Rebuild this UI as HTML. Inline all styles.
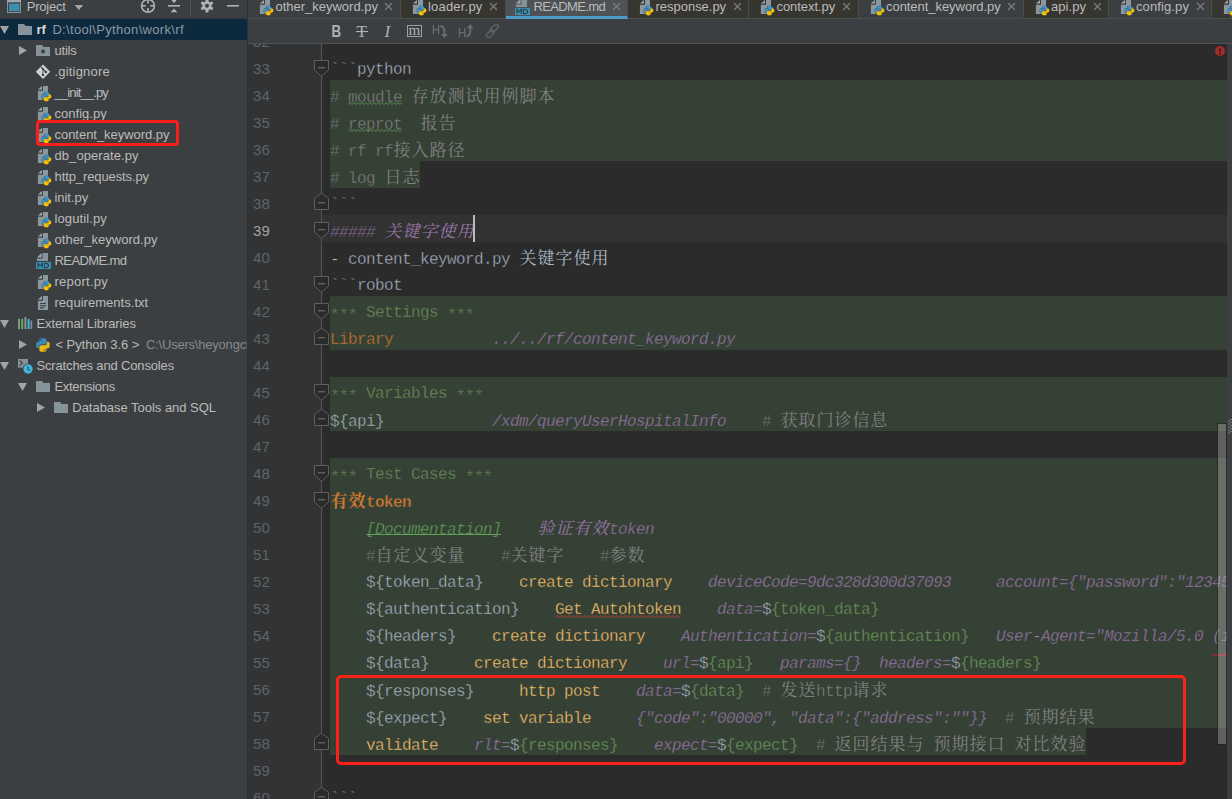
<!DOCTYPE html>
<html><head><meta charset="utf-8"><title>README.md</title><style>
*{margin:0;padding:0;box-sizing:border-box}
html,body{width:1232px;height:799px;overflow:hidden;background:#2b2b2b}
body{position:relative;font-family:"Liberation Sans",sans-serif;font-size:13px;color:#bbbbbb}
.ab{position:absolute}
#left{position:absolute;left:0;top:0;width:247px;height:799px;background:#3c3f41;overflow:hidden}
#lborder{position:absolute;left:247px;top:0;width:1px;height:799px;background:#323232}
#hdr{position:absolute;left:0;top:0;width:247px;height:18px}
#hdrline{position:absolute;left:0;top:18px;width:247px;height:1px;background:#35383a}
.sel{position:absolute;left:0;top:19px;width:247px;height:21px;background:#0d293e}
.tr{position:absolute;left:0;width:247px;height:21px}
.lb{position:absolute;top:0;line-height:21px;white-space:pre;color:#bbbbbb}
.bw{font-weight:bold;color:#dcdcdc}
.gp{color:#8c9aa3}
.gp2{color:#868a8c}
#tabs{position:absolute;left:248px;top:0;width:984px;height:19px;z-index:2;overflow:hidden}
.tab{position:absolute;top:0;height:18px;border-right:1px solid #4b4b4b;margin-left:-248px}
.tg{background:#3c3f41}.tb{background:#37352f}.ta{background:#4e5254;height:19px;border-bottom:3px solid #4a9cc5;z-index:3}
.tl{line-height:21px;top:-4px;color:#bbbbbb}
#tabline{position:absolute;left:248px;top:18px;width:984px;height:1px;background:#4b4d4f}
#tool{position:absolute;left:248px;top:19px;width:984px;height:24px;background:#3c3f41}
#toolline{position:absolute;left:248px;top:43px;width:984px;height:1px;background:#515151}
#ed{position:absolute;left:248px;top:44px;width:979px;height:755px;background:#2b2b2b;overflow:hidden}
#edin{position:absolute;left:-248px;top:-44px;width:1227px;height:799px}
#gut{position:absolute;left:248px;top:44px;width:74px;height:755px;background:#313335}
#fline{position:absolute;left:321px;top:44px;width:1px;height:755px;background:#555555;z-index:1}
#rstrip{position:absolute;left:1227px;top:44px;width:5px;height:755px;background:#3c3f41}
.gb{position:absolute;height:27px;background:#364135}
.cr{position:absolute;left:248px;right:0;height:27px;background:#323232}
.ln{position:absolute;left:253px;height:27px;line-height:27px;padding-top:1.5px;font-size:15px;letter-spacing:0.15px;color:#606366;white-space:pre}
.ln.cur{color:#a4a3a3}
.cl{position:absolute;left:330px;height:27px;line-height:27px;white-space:pre;font-family:"Liberation Mono",monospace;font-size:16px;letter-spacing:-0.6016px;color:#a9b7c6;padding-top:4px}
.k{display:inline-block;width:18px;text-align:center;letter-spacing:0;font-family:"Liberation Mono","Noto Serif CJK SC",monospace;font-size:17px;-webkit-text-stroke:0}
.bg0{-webkit-text-stroke:0.35px #2b2b2b}.bg1{-webkit-text-stroke:0.35px #364135}.bg2{-webkit-text-stroke:0.35px #323232}
.cm{color:#808080}
.gr{color:#6a8f5a}
.as{position:relative;top:3px}
.va{color:#6a9a59}
.or{color:#cc7832}
.ob{color:#cc7832;font-weight:bold}
.fn{color:#ffc66d}
.pi{color:#9876aa;font-style:italic}
.hd{color:#9876aa;font-style:italic}
.doc{color:#5fa258;font-style:italic}
#docul{position:absolute;left:366px;top:534px;width:135px;height:1px;background:#5fa258}
.fm{position:absolute;left:313px;z-index:2}
#caret{position:absolute;left:473px;top:215px;width:2px;height:27px;background:#bbbbbb}
#thumb{position:absolute;left:1218px;top:424px;width:8px;height:320px;background:rgba(194,194,194,.35);outline:1px solid rgba(30,30,30,.5)}
#redbox1{position:absolute;left:36px;top:120px;width:143px;height:26px;border:3px solid #f8201a;border-radius:4px}
#redbox2{position:absolute;left:336px;top:675px;width:850px;height:90px;border:3px solid #fa2119;border-radius:5px}
</style></head><body>
<svg width="0" height="0" style="position:absolute"><defs>
<symbol id="folds"><path d="M1.5 7.5H15.5V17L8.5 23.3L1.5 17Z" fill="#2b2b2b" stroke="#5e5e5e" stroke-width="1"/><path d="M5 14.8H12" stroke="#787878" stroke-width="1"/></symbol>
<symbol id="folde"><path d="M1.5 21.5H15.5V10.3L8.5 5.2L1.5 10.3Z" fill="#2b2b2b" stroke="#5e5e5e" stroke-width="1"/><path d="M5 14.8H12" stroke="#787878" stroke-width="1"/></symbol>
<symbol id="ifolder"><path d="M0 5H6L7.5 7H14V16H0Z" fill="#87939a"/></symbol>
<symbol id="ifolderdot"><path d="M0 5H6L7.5 7H14V16H0Z" fill="#87939a"/><circle cx="7" cy="11.5" r="2" fill="#3c3f41"/></symbol>
<symbol id="ipage"><path d="M7 4H12V18H1.9V8.8H7Z" fill="#8a979f"/><path d="M6 4V7.6H1.9Z" fill="#9aa7b0"/></symbol>
<symbol id="ipy"><use href="#ipage"/><g transform="translate(5.6,9.7) scale(0.61)"><use href="#pylogo"/></g></symbol>
<symbol id="pylogo"><path d="M7.9 0.3C5.3 0.3 4.6 1.4 4.6 2.6V4.3H8V5H2.9C1.2 5 0.3 6.3 0.3 8.3S1.2 11.6 2.9 11.6H4.3V9.4C4.3 7.9 5.5 6.8 7 6.8H10.2C11.4 6.8 12.3 5.9 12.3 4.7V2.6C12.3 1.2 10.6 0.3 7.9 0.3ZM8.1 15.7C10.7 15.7 11.4 14.6 11.4 13.4V11.7H8V11H13.1C14.8 11 15.7 9.7 15.7 7.7S14.8 4.4 13.1 4.4H11.7V6.6C11.7 8.1 10.5 9.2 9 9.2H5.8C4.6 9.2 3.7 10.1 3.7 11.3V13.4C3.7 14.8 5.4 15.7 8.1 15.7Z" fill="#3c3f41" stroke="#3c3f41" stroke-width="1.6" stroke-linejoin="round"/><path d="M7.9 0.3C5.3 0.3 4.6 1.4 4.6 2.6V4.3H8V5H2.9C1.2 5 0.3 6.3 0.3 8.3S1.2 11.6 2.9 11.6H4.3V9.4C4.3 7.9 5.5 6.8 7 6.8H10.2C11.4 6.8 12.3 5.9 12.3 4.7V2.6C12.3 1.2 10.6 0.3 7.9 0.3Z" fill="#3f96cc" stroke="#3f96cc" stroke-width="0.5"/><path d="M8.1 15.7C10.7 15.7 11.4 14.6 11.4 13.4V11.7H8V11H13.1C14.8 11 15.7 9.7 15.7 7.7S14.8 4.4 13.1 4.4H11.7V6.6C11.7 8.1 10.5 9.2 9 9.2H5.8C4.6 9.2 3.7 10.1 3.7 11.3V13.4C3.7 14.8 5.4 15.7 8.1 15.7Z" fill="#f7c40c" stroke="#f7c40c" stroke-width="0.5"/></symbol>
<symbol id="ipython"><g transform="translate(0.9,3.9) scale(0.875)"><path d="M5.9 0.3 H10.1 Q12.1 0.3 12.1 2.3 V5.8 Q12.1 7.6 10.3 7.6 H5.4 Q3.6 7.6 3.6 9.4 V11.6 H2.3 Q0.3 11.6 0.3 9.6 V6.3 Q0.3 4.3 2.3 4.3 H3.9 V2.3 Q3.9 0.3 5.9 0.3Z" fill="#3a8bba"/><circle cx="5.9" cy="2.1" r="0.8" fill="#25303a"/><path d="M 10.1 15.7 H 5.9 Q 3.9 15.7 3.9 13.7 V 10.2 Q 3.9 8.4 5.7 8.4 H 10.6 Q 12.4 8.4 12.4 6.6 V 4.4 H 13.7 Q 15.7 4.4 15.7 6.4 V 9.7 Q 15.7 11.7 13.7 11.7 H 12.1 V 13.7 Q 12.1 15.7 10.1 15.7 Z" fill="#e9b913"/><circle cx="10.1" cy="13.9" r="0.8" fill="#4a3f1a"/></g></symbol>
<symbol id="igit"><path d="M8 3.6L15.2 10.8L8 18L0.8 10.8Z" fill="#d2d2d2"/><path d="M8 8.2V13.6" stroke="#707476" stroke-width="1.3" fill="none"/><path d="M6 5.8L10.9 11" stroke="#3c3f41" stroke-width="1.1" fill="none"/><circle cx="7.9" cy="8" r="1" fill="#3c3f41"/><circle cx="10.9" cy="11" r="1.2" fill="#3c3f41"/><circle cx="8" cy="13.9" r="1.2" fill="#3c3f41"/></symbol>
<symbol id="imd"><path d="M7.5 3H13V11H2V8.5H7.5Z" fill="#87939a"/><path d="M6.5 3V7.5H2Z" fill="#9aa7b0"/><rect x="1" y="12" width="15" height="7" fill="#3d8fb0"/><path d="M3 17.7V13.3L5.2 16L7.4 13.3V17.7M9.5 13.3V17.7H11C12.6 17.7 13.4 16.8 13.4 15.5S12.6 13.3 11 13.3Z" stroke="#24404d" stroke-width="1.1" fill="none"/></symbol>
<symbol id="itxt"><use href="#ipage"/><path d="M4 11.5H10M4 13.7H10M4 15.9H8" stroke="#3c3f41" stroke-width="1.1"/></symbol>
<symbol id="ilibs"><rect x="1" y="6" width="2" height="10" fill="#87939a"/><rect x="4.2" y="6" width="2" height="10" fill="#62b543"/><rect x="7.4" y="4" width="2" height="12" fill="#87939a"/><rect x="10.6" y="6" width="2" height="10" fill="#40b6e0"/><rect x="13.6" y="7.5" width="1.6" height="8.5" fill="#87939a"/></symbol>
<symbol id="iscr"><rect x="1" y="4" width="10" height="8.6" fill="#87939a"/><path d="M2.5 5.5L5.5 8L2.5 10.5" stroke="#3c3f41" stroke-width="1.1" fill="none"/><circle cx="11" cy="14" r="5.4" fill="#3c3f41"/><circle cx="11" cy="14" r="4.7" fill="#40b6e0"/><path d="M11 11.3V14.3L12.8 15.6" stroke="#2b4a5a" stroke-width="1.1" fill="none"/></symbol>
</defs></svg>
<div id="ed"><div id="edin">
<div id="gut" style="left:248px;top:44px"></div><div id="fline"></div>
<div class="gb" style="top:80px;left:330px;right:0"></div><div class="gb" style="top:107px;left:330px;right:0"></div><div class="gb" style="top:134px;left:330px;right:0"></div><div class="gb" style="top:161px;left:330px;width:90px"></div><div class="cr" style="top:215px"></div><div class="gb" style="top:296px;left:330px;right:0"></div><div class="gb" style="top:323px;left:330px;right:0"></div><div class="gb" style="top:377px;left:330px;right:0"></div><div class="gb" style="top:404px;left:330px;right:0"></div><div class="gb" style="top:458px;left:330px;right:0"></div><div class="gb" style="top:485px;left:330px;right:0"></div><div class="gb" style="top:512px;left:330px;right:0"></div><div class="gb" style="top:539px;left:330px;right:0"></div><div class="gb" style="top:566px;left:330px;right:0"></div><div class="gb" style="top:593px;left:330px;right:0"></div><div class="gb" style="top:620px;left:330px;right:0"></div><div class="gb" style="top:647px;left:330px;right:0"></div><div class="gb" style="top:674px;left:330px;right:0"></div><div class="gb" style="top:701px;left:330px;right:0"></div><div class="gb" style="top:728px;left:330px;width:756px"></div><div class="ln" style="top:26px">32</div><div class="ln" style="top:53px">33</div><div class="cl bg0" style="top:53px">```python</div><div class="ln" style="top:80px">34</div><div class="cl bg1" style="top:80px"><span class="cm"># </span><span class="cm ty">moudle</span><span class="cm"> <span class="k">存</span><span class="k">放</span><span class="k">测</span><span class="k">试</span><span class="k">用</span><span class="k">例</span><span class="k">脚</span><span class="k">本</span></span></div><div class="ln" style="top:107px">35</div><div class="cl bg1" style="top:107px"><span class="cm"># </span><span class="cm ty">reprot</span><span class="cm">  <span class="k">报</span><span class="k">告</span></span></div><div class="ln" style="top:134px">36</div><div class="cl bg1" style="top:134px"><span class="cm"># rf rf<span class="k">接</span><span class="k">入</span><span class="k">路</span><span class="k">径</span></span></div><div class="ln" style="top:161px">37</div><div class="cl bg1" style="top:161px"><span class="cm"># log <span class="k">日</span><span class="k">志</span></span></div><div class="ln" style="top:188px">38</div><div class="cl bg0" style="top:188px">```</div><div class="ln cur" style="top:215px">39</div><div class="cl bg2" style="top:215px"><span class="hd">##### <span class="k">关</span><span class="k">键</span><span class="k">字</span><span class="k">使</span><span class="k">用</span></span></div><div class="ln" style="top:242px">40</div><div class="cl bg0" style="top:242px">- content_keyword.py <span class="k">关</span><span class="k">键</span><span class="k">字</span><span class="k">使</span><span class="k">用</span></div><div class="ln" style="top:269px">41</div><div class="cl bg0" style="top:269px">```robot</div><div class="ln" style="top:296px">42</div><div class="cl bg1" style="top:296px"><span class="gr as">***</span><span class="gr"> Settings </span><span class="gr as">***</span></div><div class="ln" style="top:323px">43</div><div class="cl bg1" style="top:323px"><span class="or">Library</span>           <span class="pi">../../rf/content_keyword.py</span></div><div class="ln" style="top:350px">44</div><div class="ln" style="top:377px">45</div><div class="cl bg1" style="top:377px"><span class="gr as">***</span><span class="gr"> Variables </span><span class="gr as">***</span></div><div class="ln" style="top:404px">46</div><div class="cl bg1" style="top:404px">${api}            <span class="pi">/xdm/queryUserHospitalInfo</span>    <span class="cm"># <span class="k">获</span><span class="k">取</span><span class="k">门</span><span class="k">诊</span><span class="k">信</span><span class="k">息</span></span></div><div class="ln" style="top:431px">47</div><div class="ln" style="top:458px">48</div><div class="cl bg1" style="top:458px"><span class="gr as">***</span><span class="gr"> Test Cases </span><span class="gr as">***</span></div><div class="ln" style="top:485px">49</div><div class="cl bg1" style="top:485px"><span class="ob"><span class="k">有</span><span class="k">效</span>token</span></div><div class="ln" style="top:512px">50</div><div class="cl bg1" style="top:512px">    <span class="doc">[Documentation]</span>    <span class="pi"><span class="k">验</span><span class="k">证</span><span class="k">有</span><span class="k">效</span>token</span></div><div class="ln" style="top:539px">51</div><div class="cl bg1" style="top:539px">    <span class="cm">#<span class="k">自</span><span class="k">定</span><span class="k">义</span><span class="k">变</span><span class="k">量</span>    #<span class="k">关</span><span class="k">键</span><span class="k">字</span>    #<span class="k">参</span><span class="k">数</span></span></div><div class="ln" style="top:566px">52</div><div class="cl bg1" style="top:566px">    ${token_data}    <span class="fn">create dictionary</span>    <span class="pi">deviceCode=9dc328d300d37093     account={&quot;password&quot;:&quot;123456&quot;}</span></div><div class="ln" style="top:593px">53</div><div class="cl bg1" style="top:593px">    ${authentication}    <span class="fn er">Get Autohtoken</span>    <span class="pi">data=</span>$<span class="va">{token_data}</span></div><div class="ln" style="top:620px">54</div><div class="cl bg1" style="top:620px">    ${headers}    <span class="fn">create dictionary</span>    <span class="pi">Authentication=</span>$<span class="va">{authentication}</span>   <span class="pi">User-Agent=&quot;Mozilla/5.0 (iPhone</span></div><div class="ln" style="top:647px">55</div><div class="cl bg1" style="top:647px">    ${data}     <span class="fn">create dictionary</span>    <span class="pi">url=</span>$<span class="va">{api}</span>   <span class="pi">params={}  headers=</span>$<span class="va">{headers}</span></div><div class="ln" style="top:674px">56</div><div class="cl bg1" style="top:674px">    ${responses}     <span class="fn">http post</span>    <span class="pi">data=</span>$<span class="va">{data}</span>  <span class="cm"># <span class="k">发</span><span class="k">送</span>http<span class="k">请</span><span class="k">求</span></span></div><div class="ln" style="top:701px">57</div><div class="cl bg1" style="top:701px">    ${expect}    <span class="fn">set variable</span>     <span class="pi">{&quot;code&quot;:&quot;00000&quot;, &quot;data&quot;:{&quot;address&quot;:&quot;&quot;}}</span>  <span class="cm"># <span class="k">预</span><span class="k">期</span><span class="k">结</span><span class="k">果</span></span></div><div class="ln" style="top:728px">58</div><div class="cl bg1" style="top:728px">    <span class="fn">validate</span>    <span class="pi">rlt=</span>$<span class="va">{responses}</span>    <span class="pi">expect=</span>$<span class="va">{expect}</span>  <span class="cm"># <span class="k">返</span><span class="k">回</span><span class="k">结</span><span class="k">果</span><span class="k">与</span> <span class="k">预</span><span class="k">期</span><span class="k">接</span><span class="k">口</span> <span class="k">对</span><span class="k">比</span><span class="k">效</span><span class="k">验</span></span></div><div class="ln" style="top:755px">59</div><div class="ln" style="top:782px">60</div><div class="cl bg0" style="top:782px">```</div><svg class="ab" style="left:348px;top:102px" width="54" height="3" viewBox="0 0 54 3"><polyline points="0,2.6 2,0.4 4,2.6 6,0.4 8,2.6 10,0.4 12,2.6 14,0.4 16,2.6 18,0.4 20,2.6 22,0.4 24,2.6 26,0.4 28,2.6 30,0.4 32,2.6 34,0.4 36,2.6 38,0.4 40,2.6 42,0.4 44,2.6 46,0.4 48,2.6 50,0.4 52,2.6 54,0.4" fill="none" stroke="#5f9a5c" stroke-width="0.85"/></svg><svg class="ab" style="left:348px;top:129px" width="54" height="3" viewBox="0 0 54 3"><polyline points="0,2.6 2,0.4 4,2.6 6,0.4 8,2.6 10,0.4 12,2.6 14,0.4 16,2.6 18,0.4 20,2.6 22,0.4 24,2.6 26,0.4 28,2.6 30,0.4 32,2.6 34,0.4 36,2.6 38,0.4 40,2.6 42,0.4 44,2.6 46,0.4 48,2.6 50,0.4 52,2.6 54,0.4" fill="none" stroke="#5f9a5c" stroke-width="0.85"/></svg><svg class="ab" style="left:555px;top:615px" width="126" height="3" viewBox="0 0 126 3"><polyline points="0,2.6 2,0.4 4,2.6 6,0.4 8,2.6 10,0.4 12,2.6 14,0.4 16,2.6 18,0.4 20,2.6 22,0.4 24,2.6 26,0.4 28,2.6 30,0.4 32,2.6 34,0.4 36,2.6 38,0.4 40,2.6 42,0.4 44,2.6 46,0.4 48,2.6 50,0.4 52,2.6 54,0.4 56,2.6 58,0.4 60,2.6 62,0.4 64,2.6 66,0.4 68,2.6 70,0.4 72,2.6 74,0.4 76,2.6 78,0.4 80,2.6 82,0.4 84,2.6 86,0.4 88,2.6 90,0.4 92,2.6 94,0.4 96,2.6 98,0.4 100,2.6 102,0.4 104,2.6 106,0.4 108,2.6 110,0.4 112,2.6 114,0.4 116,2.6 118,0.4 120,2.6 122,0.4 124,2.6 126,0.4" fill="none" stroke="#bc3f3c" stroke-width="0.85"/></svg><svg class="fm" style="top:53px" width="17" height="27" viewBox="0 0 17 27"><use href="#folds"/></svg><svg class="fm" style="top:188px" width="17" height="27" viewBox="0 0 17 27"><use href="#folde"/></svg><svg class="fm" style="top:215px" width="17" height="27" viewBox="0 0 17 27"><use href="#folds"/></svg><svg class="fm" style="top:269px" width="17" height="27" viewBox="0 0 17 27"><use href="#folds"/></svg><svg class="fm" style="top:296px" width="17" height="27" viewBox="0 0 17 27"><use href="#folds"/></svg><svg class="fm" style="top:323px" width="17" height="27" viewBox="0 0 17 27"><use href="#folde"/></svg><svg class="fm" style="top:377px" width="17" height="27" viewBox="0 0 17 27"><use href="#folds"/></svg><svg class="fm" style="top:404px" width="17" height="27" viewBox="0 0 17 27"><use href="#folde"/></svg><svg class="fm" style="top:458px" width="17" height="27" viewBox="0 0 17 27"><use href="#folds"/></svg><svg class="fm" style="top:485px" width="17" height="27" viewBox="0 0 17 27"><use href="#folds"/></svg><svg class="fm" style="top:728px" width="17" height="27" viewBox="0 0 17 27"><use href="#folde"/></svg><svg class="fm" style="top:782px" width="17" height="27" viewBox="0 0 17 27"><use href="#folde"/></svg>
<div id="caret"></div><div id="docul"></div>
<svg class="ab" style="left:1215px;top:46px" width="10" height="10"><circle cx="5" cy="5" r="5" fill="#a82926"/><rect x="4" y="2" width="2" height="4.5" rx=".4" fill="#2b2b2b"/><rect x="4" y="7.2" width="2" height="1.6" rx=".4" fill="#2b2b2b"/></svg>
<div class="ab" style="left:1213px;top:654px;width:14px;height:2px;background:#8f2b2a"></div>
<div id="thumb"></div>
</div></div>
<div id="rstrip"><svg class="ab" style="left:1px;top:375px" width="4" height="16"><g fill="#9a9a9a"><circle cx="1" cy="2" r=".7"/><circle cx="3" cy="0.5" r=".7"/><circle cx="1" cy="5" r=".7"/><circle cx="3" cy="3.5" r=".7"/><circle cx="1" cy="8" r=".7"/><circle cx="3" cy="6.5" r=".7"/><circle cx="1" cy="11" r=".7"/><circle cx="3" cy="9.5" r=".7"/><circle cx="1" cy="14" r=".7"/><circle cx="3" cy="12.5" r=".7"/></g></svg></div>
<div id="left"><div id="hdr">
<svg class="ab" style="left:0;top:0" width="247" height="18" viewBox="0 0 247 18">
<rect x="7" y="-2" width="14" height="15" fill="#87939a"/><rect x="7" y="-2" width="14" height="4" fill="#9aa7b0"/><rect x="8" y="2.4" width="12" height="9.6" fill="#3c3f41"/><rect x="9" y="3.6" width="10.5" height="7.6" fill="#3d8fb0"/>
<path d="M74.6 5H83.2L78.9 10Z" fill="#a6a6a6"/>
<g stroke="#afb1b3" stroke-width="1.6" fill="none"><circle cx="148" cy="5.8" r="6.4"/><path d="M148 -1V3.6M148 8V12.2M141.6 5.8H145.8M150.2 5.8H154.4"/>
<path d="M168 5.8H180"/><path d="M226.9 5.8H238.9"/></g>
<path d="M170.6 -1H177.4L174 3.2Z M170.6 12.2H177.4L174 8.4Z" fill="#afb1b3"/>
<rect x="190" y="0" width="1" height="16" fill="#555555"/>
<g transform="translate(207,5.8)"><g fill="#afb1b3"><circle r="4.6"/><rect x="-1.5" y="-6.6" width="3" height="13.2" rx="0.6"/><rect x="-1.5" y="-6.6" width="3" height="13.2" rx="0.6" transform="rotate(60)"/><rect x="-1.5" y="-6.6" width="3" height="13.2" rx="0.6" transform="rotate(120)"/></g><circle r="2" fill="#3c3f41"/></g>
</svg>
<span class="lb" style="left:26.8px;top:-4px;letter-spacing:-0.25px">Project</span>
</div><div id="hdrline"></div><div class="sel"></div><div class="tr" style="top:19px"><svg class="ab" style="left:0px;top:7px" width="9" height="8"><path d="M0 0H9L4.5 8Z" fill="#a3a3a3"/></svg><svg class="ab" style="left:18px;top:0px" width="18" height="21" viewBox="0 0 18 21"><use href="#ifolder"/></svg><span class="lb bw" style="left:36.4px;letter-spacing:-0.044px;">rf</span><span class="lb gp" style="left:52.4px;letter-spacing:0.329px;">D:\tool\Python\work\rf</span></div><div class="tr" style="top:40px"><svg class="ab" style="left:19px;top:6px" width="8" height="9"><path d="M0 0V9L8 4.5Z" fill="#a3a3a3"/></svg><svg class="ab" style="left:36px;top:0px" width="18" height="21" viewBox="0 0 18 21"><use href="#ifolderdot"/></svg><span class="lb " style="left:54.5px;letter-spacing:-0.224px;">utils</span></div><div class="tr" style="top:61px"><svg class="ab" style="left:35px;top:0px" width="18" height="21" viewBox="0 0 18 21"><use href="#igit"/></svg><span class="lb " style="left:54.5px;letter-spacing:0.182px;">.gitignore</span></div><div class="tr" style="top:82px"><svg class="ab" style="left:36px;top:0px" width="18" height="21" viewBox="0 0 18 21"><use href="#ipy"/></svg><span class="lb " style="left:54.5px;letter-spacing:-0.853px;">__init__.py</span></div><div class="tr" style="top:103px"><svg class="ab" style="left:36px;top:0px" width="18" height="21" viewBox="0 0 18 21"><use href="#ipy"/></svg><span class="lb " style="left:54.5px;letter-spacing:0.030px;">config.py</span></div><div class="tr" style="top:124px"><svg class="ab" style="left:36px;top:0px" width="18" height="21" viewBox="0 0 18 21"><use href="#ipy"/></svg><span class="lb " style="left:54.5px;letter-spacing:-0.035px;">content_keyword.py</span></div><div class="tr" style="top:145px"><svg class="ab" style="left:36px;top:0px" width="18" height="21" viewBox="0 0 18 21"><use href="#ipy"/></svg><span class="lb " style="left:54.5px;letter-spacing:0.067px;">db_operate.py</span></div><div class="tr" style="top:166px"><svg class="ab" style="left:36px;top:0px" width="18" height="21" viewBox="0 0 18 21"><use href="#ipy"/></svg><span class="lb " style="left:54.5px;letter-spacing:-0.101px;">http_requests.py</span></div><div class="tr" style="top:187px"><svg class="ab" style="left:36px;top:0px" width="18" height="21" viewBox="0 0 18 21"><use href="#ipy"/></svg><span class="lb " style="left:54.5px;letter-spacing:-0.051px;">init.py</span></div><div class="tr" style="top:208px"><svg class="ab" style="left:36px;top:0px" width="18" height="21" viewBox="0 0 18 21"><use href="#ipy"/></svg><span class="lb " style="left:54.5px;letter-spacing:0.109px;">logutil.py</span></div><div class="tr" style="top:229px"><svg class="ab" style="left:36px;top:0px" width="18" height="21" viewBox="0 0 18 21"><use href="#ipy"/></svg><span class="lb " style="left:54.5px;letter-spacing:0.018px;">other_keyword.py</span></div><div class="tr" style="top:250px"><svg class="ab" style="left:35px;top:0px" width="18" height="21" viewBox="0 0 18 21"><use href="#imd"/></svg><span class="lb " style="left:54.5px;letter-spacing:-0.588px;">README.md</span></div><div class="tr" style="top:271px"><svg class="ab" style="left:36px;top:0px" width="18" height="21" viewBox="0 0 18 21"><use href="#ipy"/></svg><span class="lb " style="left:54.5px;letter-spacing:0.244px;">report.py</span></div><div class="tr" style="top:292px"><svg class="ab" style="left:36px;top:0px" width="18" height="21" viewBox="0 0 18 21"><use href="#itxt"/></svg><span class="lb " style="left:54.5px;letter-spacing:0.031px;">requirements.txt</span></div><div class="tr" style="top:313px"><svg class="ab" style="left:0px;top:7px" width="9" height="8"><path d="M0 0H9L4.5 8Z" fill="#a3a3a3"/></svg><svg class="ab" style="left:17px;top:0px" width="18" height="21" viewBox="0 0 18 21"><use href="#ilibs"/></svg><span class="lb " style="left:36.5px;letter-spacing:-0.103px;">External Libraries</span></div><div class="tr" style="top:334px"><svg class="ab" style="left:19px;top:6px" width="8" height="9"><path d="M0 0V9L8 4.5Z" fill="#a3a3a3"/></svg><svg class="ab" style="left:35px;top:0px" width="18" height="21" viewBox="0 0 18 21"><use href="#ipython"/></svg><span class="lb " style="left:55.4px;letter-spacing:-0.040px;">&lt; Python 3.6 &gt;</span><span class="lb gp2" style="left:146px;letter-spacing:-0.211px;">C:\Users\heyongchao</span></div><div class="tr" style="top:355px"><svg class="ab" style="left:0px;top:7px" width="9" height="8"><path d="M0 0H9L4.5 8Z" fill="#a3a3a3"/></svg><svg class="ab" style="left:17px;top:0px" width="18" height="21" viewBox="0 0 18 21"><use href="#iscr"/></svg><span class="lb " style="left:36.5px;letter-spacing:-0.155px;">Scratches and Consoles</span></div><div class="tr" style="top:376px"><svg class="ab" style="left:18px;top:7px" width="9" height="8"><path d="M0 0H9L4.5 8Z" fill="#a3a3a3"/></svg><svg class="ab" style="left:36px;top:0px" width="18" height="21" viewBox="0 0 18 21"><use href="#ifolder"/></svg><span class="lb " style="left:54.5px;letter-spacing:-0.329px;">Extensions</span></div><div class="tr" style="top:397px"><svg class="ab" style="left:37px;top:6px" width="8" height="9"><path d="M0 0V9L8 4.5Z" fill="#a3a3a3"/></svg><svg class="ab" style="left:54px;top:0px" width="18" height="21" viewBox="0 0 18 21"><use href="#ifolder"/></svg><span class="lb " style="left:72.3px;letter-spacing:-0.027px;">Database Tools and SQL</span></div><div id="redbox1"></div></div>
<div id="lborder"></div>
<div id="tabs"><div class="tab tg" style="left:248px;width:152.5px"><svg class="ab" style="left:10px;top:-4px" width="18" height="21" viewBox="0 0 18 21"><use href="#ipy"/></svg><span class="lb tl" style="left:27.5px;letter-spacing:-0.013px;">other_keyword.py</span><svg class="ab" style="left:136.4px;top:2px" width="9" height="9"><path d="M1 1L8 8M8 1L1 8" stroke="#7b7d7f" stroke-width="1.2" fill="none"/></svg></div><div class="tab tb" style="left:400.5px;width:105.5px"><svg class="ab" style="left:10px;top:-4px" width="18" height="21" viewBox="0 0 18 21"><use href="#ipy"/></svg><span class="lb tl" style="left:27.5px;letter-spacing:0.193px;">loader.py</span><svg class="ab" style="left:88.5px;top:2px" width="9" height="9"><path d="M1 1L8 8M8 1L1 8" stroke="#7b7d7f" stroke-width="1.2" fill="none"/></svg></div><div class="tab ta" style="left:506px;width:122px"><svg class="ab" style="left:8px;top:-4px" width="18" height="21" viewBox="0 0 18 21"><use href="#imd"/></svg><span class="lb tl" style="left:27.5px;letter-spacing:-0.632px;">README.md</span><svg class="ab" style="left:105.6px;top:2px" width="9" height="9"><path d="M1 1L8 8M8 1L1 8" stroke="#7b7d7f" stroke-width="1.2" fill="none"/></svg></div><div class="tab tb" style="left:628px;width:121px"><svg class="ab" style="left:10px;top:-4px" width="18" height="21" viewBox="0 0 18 21"><use href="#ipy"/></svg><span class="lb tl" style="left:27.5px;letter-spacing:-0.020px;">response.py</span><svg class="ab" style="left:104.6px;top:2px" width="9" height="9"><path d="M1 1L8 8M8 1L1 8" stroke="#7b7d7f" stroke-width="1.2" fill="none"/></svg></div><div class="tab tb" style="left:749px;width:109.5px"><svg class="ab" style="left:10px;top:-4px" width="18" height="21" viewBox="0 0 18 21"><use href="#ipy"/></svg><span class="lb tl" style="left:27.5px;letter-spacing:-0.056px;">context.py</span><svg class="ab" style="left:92.7px;top:2px" width="9" height="9"><path d="M1 1L8 8M8 1L1 8" stroke="#7b7d7f" stroke-width="1.2" fill="none"/></svg></div><div class="tab tg" style="left:858.5px;width:165.0px"><svg class="ab" style="left:10px;top:-4px" width="18" height="21" viewBox="0 0 18 21"><use href="#ipy"/></svg><span class="lb tl" style="left:27.5px;letter-spacing:-0.051px;">content_keyword.py</span><svg class="ab" style="left:148.7px;top:2px" width="9" height="9"><path d="M1 1L8 8M8 1L1 8" stroke="#7b7d7f" stroke-width="1.2" fill="none"/></svg></div><div class="tab tb" style="left:1023.5px;width:85.0px"><svg class="ab" style="left:10px;top:-4px" width="18" height="21" viewBox="0 0 18 21"><use href="#ipy"/></svg><span class="lb tl" style="left:27.5px;letter-spacing:0.052px;">api.py</span><svg class="ab" style="left:69.0px;top:2px" width="9" height="9"><path d="M1 1L8 8M8 1L1 8" stroke="#7b7d7f" stroke-width="1.2" fill="none"/></svg></div><div class="tab tg" style="left:1108.5px;width:103.0px"><svg class="ab" style="left:10px;top:-4px" width="18" height="21" viewBox="0 0 18 21"><use href="#ipy"/></svg><span class="lb tl" style="left:27.5px;letter-spacing:0.108px;">config.py</span><svg class="ab" style="left:87.0px;top:2px" width="9" height="9"><path d="M1 1L8 8M8 1L1 8" stroke="#7b7d7f" stroke-width="1.2" fill="none"/></svg></div><div class="tab tb" style="left:1211.5px;width:20.5px"><svg class="ab" style="left:10px;top:-4px" width="18" height="21" viewBox="0 0 18 21"><use href="#ipy"/></svg></div></div><div id="tabline"></div>
<div id="tool">
<svg class="ab" style="left:0;top:0" width="300" height="24" viewBox="248 19 300 24">
<text x="331.5" y="36.8" font-family="Liberation Sans" font-weight="bold" font-size="16.3" textLength="9.6" lengthAdjust="spacingAndGlyphs" fill="#afb1b3">B</text>
<text x="356.5" y="36.8" font-family="Liberation Serif" font-size="17" fill="#afb1b3">T</text><rect x="356" y="31" width="12" height="1.1" fill="#afb1b3"/>
<text x="384.5" y="36.8" font-family="Liberation Serif" font-style="italic" font-size="17" fill="#afb1b3">I</text>
<rect x="407.5" y="25.5" width="14" height="11" fill="none" stroke="#9c9ea0" stroke-width="1"/><text x="408.6" y="35.4" font-family="Liberation Serif" font-size="15" textLength="11.8" lengthAdjust="spacingAndGlyphs" fill="#afb1b3">m</text>
<g fill="none" stroke="#6a6c6e" stroke-width="1.3"><path d="M433.4 25V34M438.6 25V34M433.4 29.7H438.6"/><path d="M459.5 28V37M464.7 28V37M459.5 32.7H464.7"/></g>
<g fill="none" stroke="#6a6c6e" stroke-width="1.9"><path d="M440.3 26C443.6 26.3 444.4 29 444.4 31.5V35"/><path d="M466.3 36.2C469.6 35.9 470.3 33.2 470.3 30.7V27.5"/></g>
<path d="M441 34H447.8L444.4 38Z M466.9 28.3H473.7L470.3 24.2Z" fill="#6a6c6e"/>
<g fill="none" stroke="#606264" stroke-width="1.4" transform="translate(492.2,31) rotate(-42)"><rect x="-7.9" y="-1.4" width="9" height="4.2" rx="2.1"/><rect x="-1.1" y="-2.8" width="9" height="4.2" rx="2.1"/></g>
</svg>
</div><div id="toolline"></div>
<div id="redbox2"></div>
</body></html>
